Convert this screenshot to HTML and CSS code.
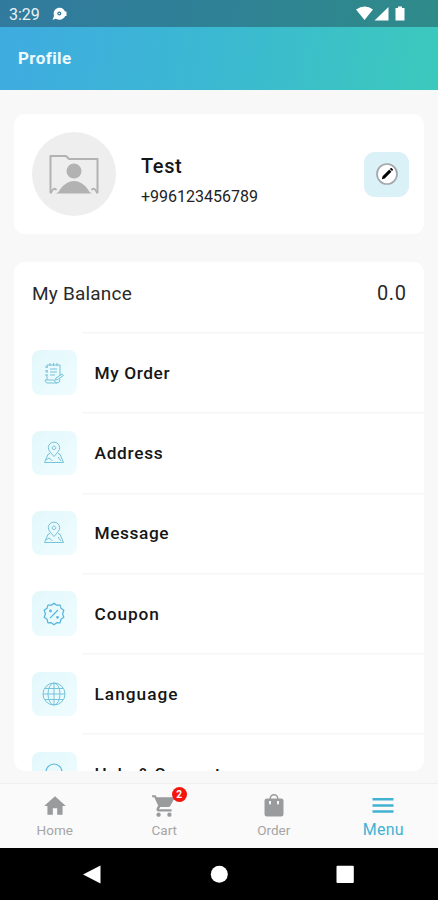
FILE: index.html
```html
<!DOCTYPE html>
<html lang="en">
<head>
<meta charset="utf-8">
<title>Profile</title>
<link rel="stylesheet" href="styles.css">
</head>
<body>
<svg width="0" height="0" class="defs">
  <symbol id="pin" viewBox="0 0 24 24"><path d="M12 15.500C9 12 6.300 9.500 6.300 6.800a5.700 5.700 0 0 1 11.400 0c0 2.700-2.700 5.200-5.700 8.700zM12 4.700l2.200 2.100L12 9 9.800 6.800zM8 12.500l-2 .8L2.500 21.500h19L18 13.300l-2-.8M4 19l3-2 2 1.500 1.500 1.500M16 16l3 4"/></symbol>
</svg>
<div class="app">
  <header class="header">
    <div class="status">
      <span class="clock">3:29</span>
      <svg class="notice" width="17" height="16" viewBox="0 0 17 16"><path fill="#fff" d="M1.500 14l1.500-4A6 6 0 1 1 7 13.500L4.500 12.800zM13.500 5.500h2V10h-2z"/><circle cx="8.300" cy="7.500" r="2" fill="#2f7d94"/><circle cx="8.300" cy="7.500" r=".8" fill="#fff"/></svg>
      <svg class="signals" width="52" height="18" viewBox="0 0 52 18" fill="#fff"><path d="M0 4.500Q9 -1.500 17 4.500L8.500 15zM32.500 2v13.500H18.500zM42 3V1.500h4V3h2.500v12.500h-9V3z"/></svg>
    </div>
    <h1 class="title">Profile</h1>
  </header>

  <main class="content">
    <section class="card user">
      <div class="avatar">
        <svg width="50" height="40" viewBox="0 0 50 40"><path d="M3 38.500H1.500V2H17l3 3h28.500v33.500H47" fill="none" stroke="#b2b2b2" stroke-width="2" stroke-linejoin="round"/><path d="M2 38.500q3-6 5.500-2.500M48 38.500q-3-6-5.500-2.500" fill="none" stroke="#b2b2b2" stroke-width="1.800"/><circle cx="25" cy="17" r="7.500" fill="#b2b2b2"/><path d="M7 39.500q3-1 4-4Q17 27 25 27t14 8.500q1 3 4 4z" fill="#b2b2b2"/></svg>
      </div>
      <div class="who">
        <div class="name">Test</div>
        <div class="phone">+996123456789</div>
      </div>
      <button class="edit" aria-label="Edit">
        <svg width="24" height="24" viewBox="0 0 24 24"><circle cx="12" cy="12" r="10" fill="#fff" stroke="#a3a7a9" stroke-width="1.700"/><path d="M6.800 17.200l.8-2.900 6.700-6.700 2.100 2.100-6.700 6.700zM14.900 7l.9-.9q.5-.3 1 .1l1 1q.4.500 0 1l-.8.900z"/></svg>
      </button>
    </section>

    <section class="card menu">
      <div class="balance"><span>My Balance</span><span class="amount">0.0</span></div>
      <div class="row">
        <i class="tile"><svg width="20" height="22" viewBox="0 0 20 22"><path d="M3 3h13v11M3 3v3M3 8v3M3 13v5M1 5h3M1 9h3M1 13h3M6 1v3M9.500 1v3M13 1v3M6 7h7M6 10h7M6 13h5M1 18h9q1 3 3 3H3q-2-1-2-3M13 21q3 0 3-4M12 16l6-4 1.500 1.500-6 4-2.500.5z"/></svg></i>
        <span class="label order">My Order</span>
      </div>
      <div class="row">
        <i class="tile"><svg width="24" height="24"><use href="#pin"/></svg></i>
        <span class="label address">Address</span>
      </div>
      <div class="row">
        <i class="tile"><svg width="24" height="24"><use href="#pin"/></svg></i>
        <span class="label message">Message</span>
      </div>
      <div class="row">
        <i class="tile strong"><svg width="24" height="24" viewBox="0 0 24 24"><path d="M12 1.200l2.700 2 3.400-.1.900 3.200 2.800 2-1.200 3.700 1.200 3.200-2.800 2-.9 3.600-3.400-.1-2.700 2-2.700-2-3.400.1-.9-3.600-2.800-2L3.400 12 2.200 8.300l2.800-2 .9-3.200 3.400.1zM8 16.200L16 8"/><circle cx="8.500" cy="9" r=".8"/><circle cx="15.500" cy="15.300" r=".8"/></svg></i>
        <span class="label coupon">Coupon</span>
      </div>
      <div class="row">
        <i class="tile"><svg width="24" height="24" viewBox="0 0 24 24"><circle cx="12" cy="12" r="11"/><ellipse cx="12" cy="12" rx="6" ry="11"/><path d="M12 1v22M1 12h22M3 6.500h18M3 17.500h18"/></svg></i>
        <span class="label language">Language</span>
      </div>
      <div class="row">
        <i class="tile strong"><svg width="22" height="22" viewBox="0 0 22 22"><circle cx="11" cy="9" r="8"/><path d="M7 16v5h8v-5"/></svg></i>
        <span class="label help">Help &amp; Support</span>
      </div>
    </section>
  </main>

  <nav class="tabs">
    <a class="tab"><svg width="26" height="26" viewBox="0 0 24 24"><path d="M10 20v-6h4v6h5v-8h3L12 3 2 12h3v8z"/></svg><span class="home">Home</span></a>
    <a class="tab"><svg width="26" height="26" viewBox="0 0 24 24"><path d="M7 18c-1.100 0-2 .9-2 2s.9 2 2 2 2-.9 2-2-.9-2-2-2zM1 2v2h2l3.600 7.600-1.300 2.400C4.500 15.400 5.500 17 7 17h12v-2H7.400l1.200-2h7.400c.8 0 1.400-.4 1.800-1L21.300 5.500c.4-.7-.1-1.500-.8-1.500H5.200l-.9-2zM17 18a2 2 0 1 0 0 4 2 2 0 0 0 0-4z"/></svg><b class="badge">2</b><span class="cart">Cart</span></a>
    <a class="tab"><svg width="24" height="26" viewBox="0 0 24 26"><path fill-rule="evenodd" d="M5 5.500h2.500a4.500 4.500 0 0 1 9 0H19q2.500 0 2.500 2v13.800q0 2.200-2.500 2.200H5q-2.500 0-2.500-2.200V7.500q0-2 2.500-2zM9 5.500h6a3 3 0 0 0-6 0zM7 8v2.500a1 1 0 0 0 2 0V8zM15 8v2.500a1 1 0 0 0 2 0V8z"/></svg><span class="orders">Order</span></a>
    <a class="tab active"><svg width="22" height="26" viewBox="0 0 22 26"><path d="M.5 5h21v2.400H.5zM.5 11.300h21v2.400H.5zM.5 17.300h21v2.400H.5z"/></svg><span class="more">Menu</span></a>
  </nav>

  <footer class="system">
    <svg width="438" height="53" viewBox="0 0 438 53" fill="#fff"><path d="M83 26.500L100.500 17.500V35.500z"/><circle cx="219.300" cy="26.200" r="8.500"/><rect x="336.500" y="17.700" width="17.300" height="17.300" rx="1"/></svg>
  </footer>
</div>
</body>
</html>
```
FILE: styles.css
```css
* { box-sizing: border-box; }
body { margin: 0; font-family: Roboto, "Liberation Sans", sans-serif; color: #161616; }
.defs { display: block; height: 0; }
.app { width: 438px; height: 900px; display: flex; flex-direction: column; background: #f8f8f8; overflow: hidden; }

.header { height: 89.500px; flex: none; background: linear-gradient(100deg, #3fabe1 0%, #3bb8d2 48%, #3cc9bc 100%); }
.status { height: 27px; display: flex; align-items: center; padding: 0 30px 0 9px; background: rgba(31, 55, 66, .42); }
.clock { font-size: 16px; color: #e9f2f4; width: 42px; padding-top: 2px; }
.signals { margin-left: auto; }
.title { margin: 0; padding-left: 18px; height: 62px; line-height: 63px; font-size: 17px; font-weight: 700; letter-spacing: .4px; color: #eefcff; }

.content { flex: none; height: 693px; padding: 24.500px 14px 0; display: flex; flex-direction: column; gap: 28px; }
.card { background: #fff; border-radius: 11px; flex: none; }
.user { height: 120px; padding: 0 15px 0 18px; display: flex; align-items: center; }
.avatar { width: 84px; height: 84px; border-radius: 50%; background: #eee; display: flex; align-items: center; justify-content: center; }
.who { margin-left: 25px; padding-top: 15px; flex: 1; }
.name { font-size: 20px; line-height: 30px; font-weight: 500; letter-spacing: .6px; }
.phone { font-size: 16px; line-height: 32px; color: #222; }
.edit { width: 45px; height: 45px; border: 0; padding: 0; border-radius: 11px; background: #d9f1f7; display: flex; align-items: center; justify-content: center; }

.menu { height: 509px; overflow: hidden; }
.balance { height: 70px; padding: 0 18px 8px; display: flex; justify-content: space-between; align-items: center; font-size: 19px; letter-spacing: .2px; color: #2a2a2a; }
.amount { font-size: 20px; letter-spacing: .6px; margin-right: -.6px; }
.row { height: 80.300px; padding: 1px 0 0 18px; display: flex; align-items: center; background: linear-gradient(#f6f6f6, #f6f6f6) 68px 0 / 100% 1.500px no-repeat; }
.tile { width: 44.500px; height: 44.500px; margin-right: 18px; border-radius: 8px; background: linear-gradient(135deg, #e3f8fb, #effcff); display: flex; align-items: center; justify-content: center; }
.tile svg { fill: none; stroke: #76c2d8; stroke-width: 1; stroke-linejoin: round; }
.tile.strong svg { stroke: #55b4dc; stroke-width: 1.200; }
.label { font-size: 17.300px; line-height: 20px; font-weight: 500; white-space: nowrap; letter-spacing: .7px; }
.order { letter-spacing: .6px; }
.message { letter-spacing: .6px; }
.coupon { letter-spacing: .9px; }
.language { letter-spacing: 1px; }

.tabs { height: 65px; flex: none; display: grid; grid-template-columns: repeat(4, 1fr); border-top: 1.500px solid #f0f0f0; background: #fafafa; }
.tab { position: relative; display: flex; flex-direction: column; align-items: center; padding-top: 9px; font-size: 13.500px; line-height: 22px; color: #a5a5a5; }
.tab svg { fill: #999b9d; }
.tab.active { font-size: 16px; line-height: 21px; letter-spacing: .2px; color: #42b2d2; }
.tab.active svg { fill: #42b2d2; }
.badge { position: absolute; left: 62px; top: 3px; width: 15px; height: 15px; border-radius: 50%; background: #f3160d; color: #fff; font-size: 10px; line-height: 15px; text-align: center; }
.system { flex: 1; background: #000; }
.system svg { display: block; }
```
